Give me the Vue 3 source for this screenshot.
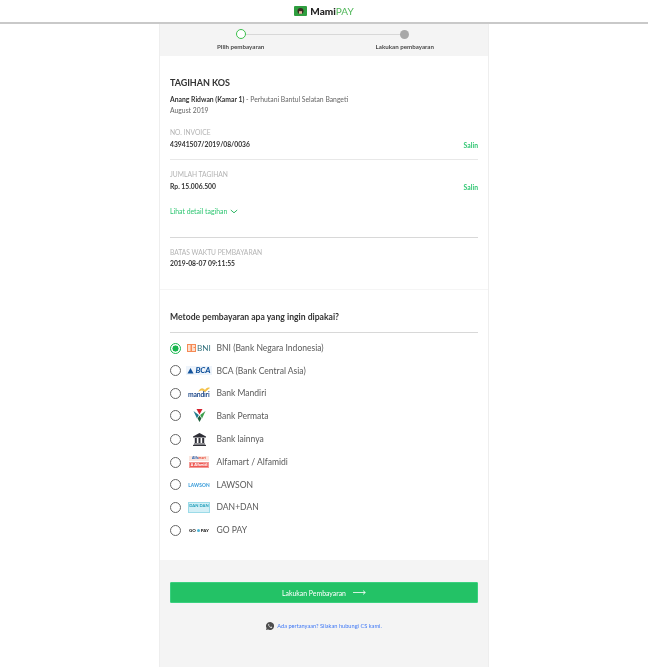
<script setup>
const methods = [
  { id: 'bni', label: 'BNI (Bank Negara Indonesia)', h: 22.5, on: true },
  { id: 'bca', label: 'BCA (Bank Central Asia)', h: 22.500 },
  { id: 'mandiri', label: 'Bank Mandiri', h: 22 },
  { id: 'permata', label: 'Bank Permata', h: 23.500 },
  { id: 'other', label: 'Bank lainnya', h: 23 },
  { id: 'alfa', label: 'Alfamart / Alfamidi', h: 23 },
  { id: 'lawson', label: 'LAWSON', h: 22.500 },
  { id: 'dan', label: 'DAN+DAN', h: 22.500 },
  { id: 'gopay', label: 'GO PAY', h: 23 }
]
</script>

<template>
  <div class="page">
    <header class="topbar">
      <svg class="logo-mark" width="13" height="10" viewBox="0 0 13 10">
        <rect width="13" height="10" rx="1" fill="#2f9e3f" />
        <circle cx="6.500" cy="5" r="3" fill="#3a2a22" />
        <rect x="5" y="5.200" width="3" height="2.600" fill="#e6b8a0" />
      </svg>
      <span class="logo-text"><b>Mami</b><span class="pay">PAY</span></span>
    </header>

    <main class="column">
      <section class="stepper">
        <div class="step">
          <span class="dot dot-active"></span>
          <span class="step-label">Pilih pembayaran</span>
        </div>
        <div class="step">
          <span class="dot dot-next"></span>
          <span class="step-label">Lakukan pembayaran</span>
        </div>
        <span class="step-line"></span>
      </section>

      <section class="bill">
        <h1>TAGIHAN KOS</h1>
        <p class="desc"><b>Anang Ridwan (Kamar 1)</b> - Perhutani Bantul Selatan Bangeti</p>
        <p class="desc month">August 2019</p>

        <div class="field invoice">
          <div>
            <div class="label">NO. INVOICE</div>
            <div class="value">43941507/2019/08/0036</div>
          </div>
          <a class="copy">Salin</a>
        </div>

        <div class="field amount">
          <div>
            <div class="label">JUMLAH TAGIHAN</div>
            <div class="value">Rp. 15.006.500</div>
          </div>
          <a class="copy">Salin</a>
        </div>

        <div class="detail">
          Lihat detail tagihan
          <svg width="8" height="5" viewBox="0 0 8 5"><path d="M.8 1 4 3.800 7.200 1" fill="none" stroke="#2fb765" stroke-width="1" /></svg>
        </div>

        <div class="deadline">
          <div class="label">BATAS WAKTU PEMBAYARAN</div>
          <div class="value">2019-08-07 09:11:55</div>
        </div>
      </section>

      <section class="methods">
        <h2>Metode pembayaran apa yang ingin dipakai?</h2>
        <ul>
          <li v-for="m in methods" :key="m.id" class="method" :style="{ height: m.h + 'px' }">
            <span class="radio" :class="{ checked: m.on }"></span>
            <span class="brand">
              <template v-if="m.id === 'bni'">
                <svg width="9" height="8" viewBox="0 0 9 8"><rect width="9" height="8" fill="#f58a55" /><path d="M1 1h2.500v6H1zM5 1h3v2H6.500v1H8v3H5z" fill="#fde0cf" /></svg>
                <span class="bni">BNI</span>
              </template>
              <template v-else-if="m.id === 'bca'">
                <span class="bca-wrap">
                  <svg width="7" height="6" viewBox="0 0 7 6"><path d="M3.500 0 6.500 5.500H.5z" fill="#14549c" /></svg>
                  <span class="bca">BCA</span>
                </span>
              </template>
              <template v-else-if="m.id === 'mandiri'">
                <span class="mandiri">mandiri<svg width="12" height="6" viewBox="0 0 12 6"><path d="M0 5C3 0 5 1 7 3 8 1 10 0 12 1 10 2 9 4 7 5 5 3 3 3 0 5Z" fill="#f4c24a" /></svg></span>
              </template>
              <template v-else-if="m.id === 'permata'">
                <svg width="13" height="13" viewBox="0 0 13 13">
                  <path d="M.5 2 5.800 6 4 9.500Z" fill="#1f7a8c" />
                  <path d="M3.500 0h6L6.500 5.500Z" fill="#d4232f" />
                  <path d="M12.500 2 7.200 6 9 9.500Z" fill="#3a9e4a" />
                  <path d="M4.600 9.500 6.500 6.500l1.900 3L6.500 13Z" fill="#1f5f3c" />
                </svg>
              </template>
              <template v-else-if="m.id === 'other'">
                <svg width="13" height="13" viewBox="0 0 13 13" fill="#2f2f37">
                  <path d="M6.500 0 13 3.400V4.400H0V3.400Z" />
                  <rect x="1.800" y="5" width="2" height="5" />
                  <rect x="5.500" y="5" width="2" height="5" />
                  <rect x="9.200" y="5" width="2" height="5" />
                  <rect x="1" y="10.500" width="11" height="1" />
                  <rect y="11.800" width="13" height="1.200" />
                </svg>
              </template>
              <template v-else-if="m.id === 'alfa'">
                <span class="alfa">
                  <span class="alfa-top"><i>Alfa</i><em>mart</em></span>
                  <span class="alfa-bottom"><i>A</i>Alfamidi</span>
                </span>
              </template>
              <span v-else-if="m.id === 'lawson'" class="lawson">LAWSON</span>
              <span v-else-if="m.id === 'dan'" class="dan">DAN DAN</span>
              <span v-else class="gopay">GO<i></i>PAY</span>
            </span>
            <span class="method-label">{{ m.label }}</span>
          </li>
        </ul>
      </section>

      <section class="footer">
        <button class="pay-btn" type="button">
          Lakukan Pembayaran
          <svg width="13" height="5" viewBox="0 0 13 5"><path d="M0 2.500h12M10 .6l2.400 1.900L10 4.400" fill="none" stroke="#fff" stroke-width=".8" /></svg>
        </button>
        <div class="help">
          <svg width="8" height="8" viewBox="0 0 16 16">
            <path d="M8 0a8 8 0 0 0-6.900 12L0 16l4.100-1.100A8 8 0 1 0 8 0Z" fill="#4d4d4d" />
            <path d="M5.400 4c-.9.8-1 2.200-.2 3.700 1 1.800 2.700 3.300 4.400 3.900 1.400.4 2.500-.1 2.900-1.200l-1.900-1.200-1 .9C7.600 9.400 6.600 8.300 6 7l.8-1L5.900 4Z" fill="#fff" />
          </svg>
          <span>Ada pertanyaan? Silakan hubungi CS kami.</span>
        </div>
      </section>
    </main>
  </div>
</template>

<style>
html, body { margin: 0; background: #fff; }
</style>

<style scoped>
.page {
  height: 667px;
  overflow: hidden;
  font-family: Lato, "Liberation Sans", sans-serif;
  color: #444;
  filter: blur(0.45px);
}
.topbar {
  height: 22px;
  border-bottom: 2px solid #c9c9c9;
  background: #fff;
  display: flex;
  align-items: center;
  justify-content: center;
  gap: 3px;
}
.logo-mark { display: block; }
.logo-text { font-size: 10px; line-height: 11px; color: #222; }
.logo-text b { font-weight: 900; }
.pay { color: #4fb658; font-weight: 400; }

.column {
  box-sizing: border-box;
  width: 330px;
  margin-left: 159px;
  height: 643px;
  border-left: 1px solid #eee;
  border-right: 1px solid #eee;
}
.stepper {
  position: relative;
  height: 32px;
  background: #f4f4f4;
  display: flex;
  justify-content: space-between;
  padding: 0 54px 0 57px;
}
.step {
  position: relative;
  z-index: 1;
  display: flex;
  flex-direction: column;
  align-items: center;
  padding-top: 5px;
}
.dot { box-sizing: border-box; display: block; width: 10px; height: 10px; border-radius: 50%; }
.dot-active { border: 1.600px solid #3cc04d; background: #fff; }
.dot-next { width: 9px; height: 9px; background: #a8a8a8; margin-top: 0.5px; }
.step-label { margin-top: 3px; font-size: 6.200px; line-height: 9px; font-weight: 700; color: #4a4a4a; white-space: nowrap; }
.step-line { position: absolute; left: 85px; right: 85px; top: 9.500px; height: 1px; background: #d8d8d8; }

.bill { box-sizing: border-box; height: 234px; padding: 22px 10px 0; border-bottom: 1px solid #f5f5f5; }
h1 { margin: 0; font-size: 9px; line-height: 10px; font-weight: 700; color: #333; letter-spacing: -.05px; }
.desc { margin: 7px 0 0; font-size: 6.800px; line-height: 9px; color: #666; white-space: nowrap; }
.desc b { color: #333; }
.desc.month { margin-top: 2px; }
.field { display: flex; justify-content: space-between; align-items: flex-start; }
.invoice { margin-top: 13px; height: 31px; border-bottom: 1px solid #e8e8e8; }
.amount { margin-top: 10px; }
.label { font-size: 6.700px; line-height: 9px; color: #b4b4b4; white-space: nowrap; }
.value { margin-top: 2.600px; font-size: 6.750px; line-height: 9px; font-weight: 700; color: #333; white-space: nowrap; }
.copy { margin-top: 12.500px; font-size: 6.800px; line-height: 9px; font-weight: 700; color: #2fc672; }
.detail {
  margin-top: 15px;
  font-size: 6.900px;
  line-height: 9px;
  color: #2fc672;
  display: flex;
  align-items: center;
  gap: 3px;
}
.deadline { margin-top: 21px; border-top: 1px solid #d8d8d8; padding-top: 10px; }

.methods { box-sizing: border-box; height: 269.500px; padding: 21px 10px 0; }
h2 { margin: 0; font-size: 8.600px; line-height: 12px; font-weight: 700; color: #333; white-space: nowrap; height: 21px; border-bottom: 1px solid #d8d8d8; }
ul { list-style: none; margin: 4px 0 0; padding: 0; }
.method { display: flex; align-items: center; }
.radio { box-sizing: border-box; width: 11px; height: 11px; flex: none; border: 1.300px solid #666; border-radius: 50%; background: #fff; }
.radio.checked { border: 1.300px solid #18b64e; background: radial-gradient(circle, #18b64e 0 2.800px, #fff 3.300px); }
.brand { width: 24px; margin-left: 6px; flex: none; display: flex; align-items: center; justify-content: center; gap: 1px; }
.method-label { margin-left: 5.500px; font-size: 8.550px; color: #5a5a5a; white-space: nowrap; }
.bni { font-size: 8.200px; line-height: 9px; color: #36737f; }
.bca-wrap { display: flex; align-items: center; gap: 1px; padding: 0 1px; background: #eef4fb; }
.bca { font-size: 8px; line-height: 9px; font-weight: 900; font-style: italic; color: #14549c; }
.mandiri { position: relative; width: 22px; font-size: 6.800px; font-weight: 700; letter-spacing: -.2px; color: #1f4a8a; line-height: 7px; padding-top: 3px; }
.mandiri svg { position: absolute; right: 0; top: -1px; }
.alfa { width: 20px; display: flex; flex-direction: column; gap: 1px; font-size: 3.500px; line-height: 5px; font-weight: 900; }
.alfa-top { height: 5px; text-align: center; background: #fbe6df; }
.alfa-top i { font-style: normal; color: #1f5fb0; }
.alfa-top em { font-style: normal; color: #e8503f; }
.alfa-bottom { height: 6px; text-align: center; background: #ef5a55; color: #fff; border: 1px solid #f29a96; box-sizing: border-box; line-height: 4px; }
.alfa-bottom i { font-style: normal; margin-right: 1px; }
.lawson { font-size: 4.800px; font-weight: 900; color: #3f9fdb; letter-spacing: .1px; white-space: nowrap; }
.dan { box-sizing: border-box; display: block; width: 22px; height: 11px; background: #d3eff6; border: 1px solid #9cdbe8; font-size: 4.200px; line-height: 6px; text-align: center; color: #1d9db8; white-space: nowrap; font-weight: 700; }
.gopay { font-size: 4.400px; font-weight: 900; color: #222; display: flex; align-items: center; gap: 1px; }
.gopay i { width: 3px; height: 3px; border-radius: 50%; background: #4cb6d8; }

.footer {
  height: 107.500px;
  background: #f4f4f4;
  padding: 22.500px 10px 0;
}
.pay-btn {
  display: flex;
  align-items: center;
  justify-content: center;
  gap: 7px;
  width: 100%;
  height: 21px;
  border: 1px solid #3ad07f;
  border-radius: 1px;
  background: #23c266;
  color: #fff;
  font-family: inherit;
  font-size: 6.900px;
  font-weight: 400;
  padding: 0;
}
.help {
  margin-top: 19px;
  display: flex;
  align-items: center;
  justify-content: center;
  gap: 3px;
  font-size: 5.670px;
  line-height: 8px;
  color: #3f78f5;
}
</style>
